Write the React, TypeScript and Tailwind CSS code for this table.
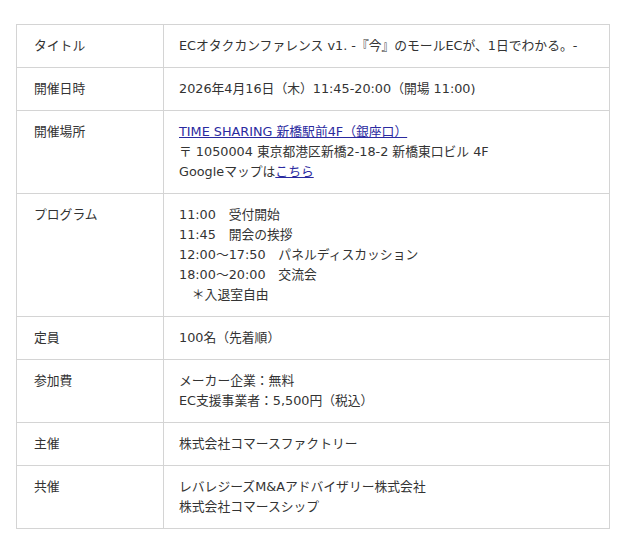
const rows: { label: string; lines: React.ReactNode[] }[] = [
  {
    label: 'タイトル',
    lines: ['ECオタクカンファレンス v1. -『今』のモールECが、1日でわかる。-'],
  },
  {
    label: '開催日時',
    lines: ['2026年4月16日（木）11:45-20:00（開場 11:00)'],
  },
  {
    label: '開催場所',
    lines: [
      <a href="#" className="text-[#2a2aa0] underline">
        TIME SHARING 新橋駅前4F（銀座口）
      </a>,
      '〒 1050004 東京都港区新橋2-18-2 新橋東口ビル 4F',
      <>
        Googleマップは
        <a href="#" className="text-[#2a2aa0] underline">
          こちら
        </a>
      </>,
    ],
  },
  {
    label: 'プログラム',
    lines: [
      '11:00　受付開始',
      '11:45　開会の挨拶',
      '12:00〜17:50　パネルディスカッション',
      '18:00〜20:00　交流会',
      '　＊入退室自由',
    ],
  },
  { label: '定員', lines: ['100名（先着順）'] },
  {
    label: '参加費',
    lines: ['メーカー企業：無料', 'EC支援事業者：5,500円（税込）'],
  },
  { label: '主催', lines: ['株式会社コマースファクトリー'] },
  {
    label: '共催',
    lines: ['レバレジーズM&Aアドバイザリー株式会社', '株式会社コマースシップ'],
  },
];

export default function App() {
  return (
    <div
      className="bg-white w-[640px] h-[554px] pt-[24px] pl-[16px] text-[12.8px] leading-[20px] text-[#333]"
      style={{ fontFamily: '"DejaVu Sans", "Noto Sans CJK JP", sans-serif' }}
    >
      <table className="w-[594px] border-collapse">
        <tbody>
          {rows.map((row) => (
            <tr key={row.label}>
              <td className="w-[147px] border border-[#d4d4d4] px-[17px] py-[11px] align-top">
                {row.label}
              </td>
              <td className="border border-[#d4d4d4] px-[15px] py-[11px] align-top">
                {row.lines.map((line, i) => (
                  <div key={i}>{line}</div>
                ))}
              </td>
            </tr>
          ))}
        </tbody>
      </table>
    </div>
  );
}
